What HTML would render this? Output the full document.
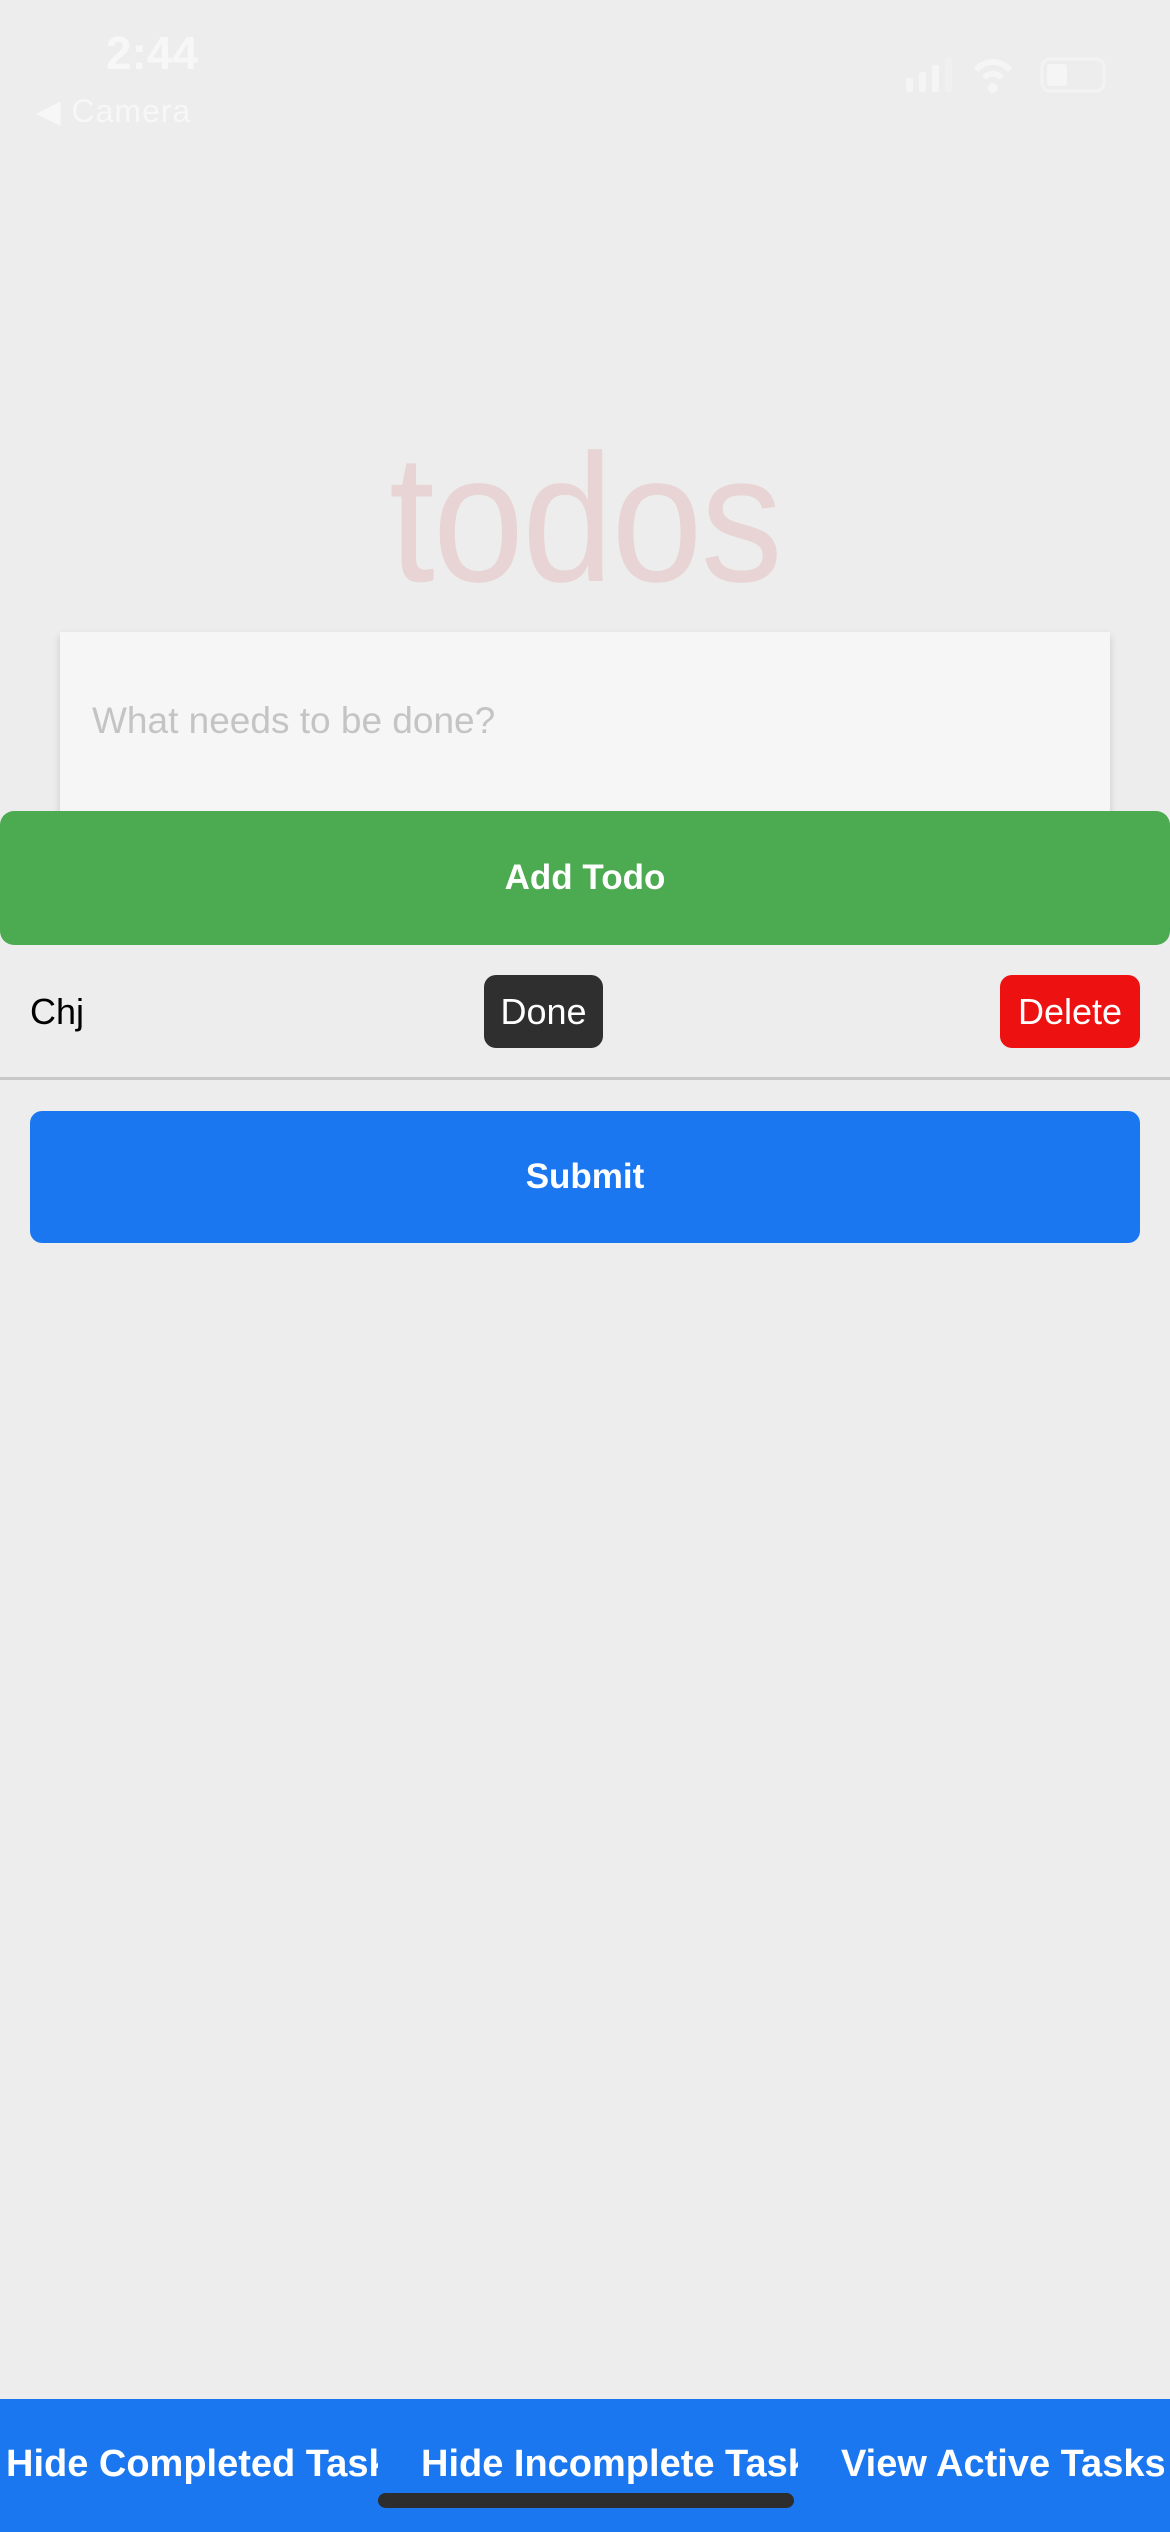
<!DOCTYPE html>
<html><head><meta charset="utf-8"><style>
*{margin:0;padding:0;box-sizing:border-box}
body{width:1170px;height:2532px;background:#ededed;position:relative;overflow:hidden;font-family:"Liberation Sans",sans-serif}
.a{position:absolute}
.c{display:flex;align-items:center;justify-content:center}
</style></head><body>
<div class="a" style="left:106px;top:26px;font-size:46px;font-weight:bold;color:#f7f7f7">2:44</div>
<div class="a" style="left:36px;top:92px;font-size:32px;color:#f7f7f7;letter-spacing:1px">◀ Camera</div>
<svg class="a" style="left:900px;top:50px" width="210" height="50">
<rect x="6" y="28" width="7" height="14" rx="2" fill="#f5f5f5"/>
<rect x="19" y="22" width="7" height="20" rx="2" fill="#f5f5f5"/>
<rect x="32" y="15" width="7" height="27" rx="2" fill="#f5f5f5"/>
<rect x="45" y="8" width="7" height="34" rx="2" fill="#f0f0f0"/>
<path d="M76 20 A22 22 0 0 1 110 20" stroke="#f5f5f5" stroke-width="6" fill="none"/>
<path d="M84 28 A12 12 0 0 1 102 28" stroke="#f5f5f5" stroke-width="6" fill="none"/>
<circle cx="93" cy="38" r="5" fill="#f5f5f5"/>
<rect x="142" y="9" width="62" height="32" rx="8" stroke="#f3f3f3" stroke-width="3" fill="none"/>
<rect x="147" y="14" width="20" height="22" rx="3" fill="#f5f5f5"/>
</svg>
<div class="a" style="left:0;width:1170px;top:418px;text-align:center;font-size:182px;color:#e8d4d4;font-weight:100;line-height:200px;transform:scaleX(0.9);letter-spacing:-2px">todos</div>
<div class="a" style="left:60px;top:632px;width:1050px;height:190px;background:#f6f6f6;box-shadow:0 4px 8px rgba(0,0,0,0.15)"></div>
<div class="a" style="left:92px;top:700px;font-size:37px;color:#c4c4c4">What needs to be done?</div>
<div class="a c" style="left:0;top:811px;width:1170px;height:134px;background:#4caa50;border-radius:14px;color:#fff;font-weight:bold;font-size:35px">Add Todo</div>
<div class="a" style="left:30px;top:991px;font-size:36px;color:#000">Chj</div>
<div class="a c" style="left:484px;top:975px;width:119px;height:73px;background:#2f2f2f;border-radius:12px;color:#fff;font-size:36px">Done</div>
<div class="a c" style="left:1000px;top:975px;width:140px;height:73px;background:#ee1111;border-radius:12px;color:#fff;font-size:36px">Delete</div>
<div class="a" style="left:0;top:1077px;width:1170px;height:3px;background:#c8c8c8"></div>
<div class="a c" style="left:30px;top:1111px;width:1110px;height:132px;background:#1a77f0;border-radius:12px;color:#fff;font-weight:bold;font-size:35px">Submit</div>
<div class="a" style="left:0;top:2399px;width:1170px;height:133px;background:#1a77f0"></div>
<div class="a" style="left:6px;top:2443px;width:372px;overflow:hidden;white-space:nowrap;color:#fff;font-weight:bold;font-size:38px">Hide Completed Tasks</div>
<div class="a" style="left:421px;top:2443px;width:377px;overflow:hidden;white-space:nowrap;color:#fff;font-weight:bold;font-size:38px">Hide Incomplete Tasks</div>
<div class="a" style="left:841px;top:2443px;white-space:nowrap;color:#fff;font-weight:bold;font-size:38px">View Active Tasks</div>
<div class="a" style="left:378px;top:2493px;width:416px;height:15px;background:#2d2d2d;border-radius:8px"></div>
</body></html>
